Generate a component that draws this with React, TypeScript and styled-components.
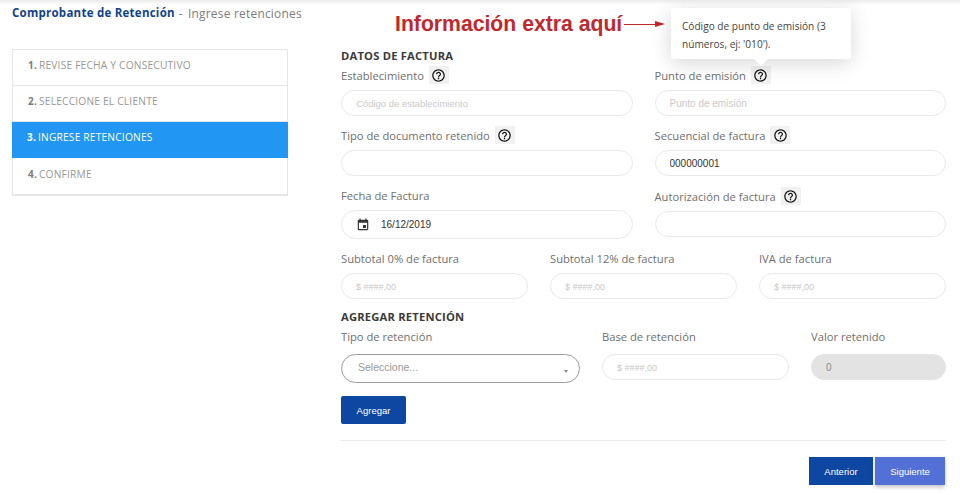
import styled, { createGlobalStyle } from "styled-components";
import { MdHelpOutline, MdEvent } from "react-icons/md";

const steps = [
  { num: "1.", text: "REVISE FECHA Y CONSECUTIVO" },
  { num: "2.", text: "SELECCIONE EL CLIENTE" },
  { num: "3.", text: "INGRESE RETENCIONES", active: true },
  { num: "4.", text: "CONFIRME" },
];

const Help = () => (
  <HelpBox>
    <MdHelpOutline size={15} />
  </HelpBox>
);

const App = () => {
  return (
    <Page>
      <GlobalStyle />
      <TopShade />
      <Annotation>
        <AnnotationText>Información extra aquí</AnnotationText>
        <AnnotationLine />
        <AnnotationHead />
      </Annotation>
      <Tooltip>Código de punto de emisión (3 números, ej: '010').</Tooltip>
      <Layout>
        <Side>
          <Heading>
            <strong>Comprobante de Retención</strong>
            <Dash>-</Dash>
            <span>Ingrese retenciones</span>
          </Heading>
          <Steps>
            {steps.map((s) => (
              <Step key={s.num} $active={s.active}>
                <b>{s.num}</b> {s.text}
              </Step>
            ))}
          </Steps>
        </Side>
        <Main>
          <SectionTitle>DATOS DE FACTURA</SectionTitle>
          <Grid $cols="1fr 1fr">
            <Field>
              <Label>
                Establecimiento <Help />
              </Label>
              <Input $hint={9.5} placeholder="Código de establecimiento" />
            </Field>
            <Field>
              <Label>
                Punto de emisión <Help />
              </Label>
              <Input $hint={10} placeholder="Punto de emisión" />
            </Field>
            <Field>
              <Label>
                Tipo de documento retenido <Help />
              </Label>
              <Input />
            </Field>
            <Field>
              <Label>
                Secuencial de factura <Help />
              </Label>
              <Input defaultValue="000000001" />
            </Field>
            <Field>
              <Label>Fecha de Factura</Label>
              <DateBox>
                <MdEvent size={14} />
                <span>16/12/2019</span>
              </DateBox>
            </Field>
            <Field $nudge>
              <Label>
                Autorización de factura <Help />
              </Label>
              <Input />
            </Field>
          </Grid>
          <Grid $cols="1fr 1fr 1fr">
            <Field>
              <Label>Subtotal 0% de factura</Label>
              <Input placeholder="$ ####,00" />
            </Field>
            <Field>
              <Label>Subtotal 12% de factura</Label>
              <Input placeholder="$ ####,00" />
            </Field>
            <Field>
              <Label>IVA de factura</Label>
              <Input placeholder="$ ####,00" />
            </Field>
          </Grid>
          <SectionTitle $top={10}>AGREGAR RETENCIÓN</SectionTitle>
          <Grid $cols="239px 187px 135px">
            <Field>
              <Label $tall>Tipo de retención</Label>
              <SelectBox>
                <span>Seleccione...</span>
                <Caret />
              </SelectBox>
            </Field>
            <Field>
              <Label $tall>Base de retención</Label>
              <Input placeholder="$ ####,00" />
            </Field>
            <Field>
              <Label $tall>Valor retenido</Label>
              <Input $disabled defaultValue="0" readOnly />
            </Field>
          </Grid>
          <AddButton>Agregar</AddButton>
          <Divider />
          <Footer>
            <NavButton>Anterior</NavButton>
            <NavButton $light>Siguiente</NavButton>
          </Footer>
        </Main>
      </Layout>
    </Page>
  );
};

export default App;

const GlobalStyle = createGlobalStyle`
  html, body {
    margin: 0;
    padding: 0;
    background: #fff;
    overflow: hidden;
  }
  * {
    box-sizing: border-box;
  }
`;

const Page = styled.div`
  position: relative;
  width: 960px;
  height: 495px;
  background: #fff;
  font-family: "Open Sans", "Liberation Sans", sans-serif;
  overflow: hidden;
`;

const TopShade = styled.div`
  height: 5px;
  background: linear-gradient(#ececec, #fff);
`;

const Layout = styled.div`
  display: flex;
  padding: 0 14px 0 12px;
`;

const Side = styled.aside`
  width: 329px;
  flex: none;
`;

const Heading = styled.div`
  display: flex;
  align-items: center;
  height: 15px;
  font-size: 11.9px;
  color: #7d7d7d;
  white-space: nowrap;
  letter-spacing: 0.25px;
  margin-bottom: 29px;
  & > strong {
    color: #123f8f;
    font-weight: 700;
    font-size: 11.5px;
  }
`;

const Dash = styled.span`
  margin: 0 5px 0 4px;
`;

const Steps = styled.div`
  width: 276px;
  border: 1px solid #e6e6e6;
  border-bottom-width: 2px;
`;

const Step = styled.div<{ $active?: boolean }>`
  height: 36px;
  display: flex;
  align-items: center;
  gap: 0;
  padding: 0 0 5px 15px;
  margin: ${(p) => (p.$active ? "0 -1px" : "0")};
  font-size: 10.2px;
  letter-spacing: 0.2px;
  color: ${(p) => (p.$active ? "#fff" : "#979797")};
  background: ${(p) => (p.$active ? "#2196f3" : "#fff")};
  border-bottom: 1px solid ${(p) => (p.$active ? "#2196f3" : "#e6e6e6")};
  &:last-child {
    border-bottom: none;
  }
  & > b {
    font-size: 10px;
    margin-right: 2px;
    color: ${(p) => (p.$active ? "#fff" : "#7c7c7c")};
  }
`;

const Main = styled.main`
  flex: 1;
  padding-top: 43px;
`;

const SectionTitle = styled.h2<{ $top?: number }>`
  margin: ${(p) => p.$top ?? 0}px 0 0;
  height: 15px;
  line-height: 15px;
  font-size: 11.2px;
  font-weight: 700;
  letter-spacing: 0.2px;
  color: #3a3a3a;
`;

const Grid = styled.div<{ $cols: string }>`
  display: grid;
  grid-template-columns: ${(p) => p.$cols};
  column-gap: 22px;
  row-gap: 7px;
  & + & {
    margin-top: 7px;
  }
`;

const Field = styled.div<{ $nudge?: boolean }>`
  display: flex;
  flex-direction: column;
  min-width: 0;
  padding-top: ${(p) => (p.$nudge ? "1px" : "0")};
`;

const Label = styled.label<{ $tall?: boolean }>`
  display: flex;
  align-items: center;
  gap: 5px;
  height: ${(p) => (p.$tall ? "30px" : "27px")};
  padding-bottom: ${(p) => (p.$tall ? "6px" : "3px")};
  font-size: 11.2px;
  color: #6f6f6f;
  white-space: nowrap;
`;

const HelpBox = styled.span`
  display: inline-flex;
  align-items: center;
  justify-content: center;
  width: 20px;
  height: 18px;
  background: #f1f1f1;
  color: #111;
`;

const Input = styled.input<{ $disabled?: boolean; $hint?: number }>`
  width: 100%;
  height: 26px;
  border: 1px solid ${(p) => (p.$disabled ? "#e3e3e3" : "#e9e9e9")};
  border-radius: 13px;
  padding: 0 14px;
  outline: none;
  font-family: "Liberation Sans", Arial, sans-serif;
  font-size: 10px;
  color: ${(p) => (p.$disabled ? "#8a8a8a" : "#333")};
  background: ${(p) => (p.$disabled ? "#e3e3e3" : "#fff")};
  &::placeholder {
    color: #c9c9c9;
    font-size: ${(p) => p.$hint ?? 9}px;
  }
`;

const DateBox = styled.div`
  display: flex;
  align-items: center;
  gap: 11px;
  height: 29px;
  padding-left: 14px;
  border: 1px solid #e9e9e9;
  border-radius: 15px;
  font-family: "Liberation Sans", Arial, sans-serif;
  font-size: 10px;
  color: #333;
`;

const SelectBox = styled.div`
  position: relative;
  display: flex;
  align-items: center;
  height: 29px;
  padding: 0 16px 3px;
  border: 1.5px solid #9c9c9c;
  border-radius: 15px;
  font-family: "Liberation Sans", Arial, sans-serif;
  font-size: 10.5px;
  color: #999;
`;

const Caret = styled.i`
  position: absolute;
  right: 11px;
  top: 15px;
  border-left: 2.5px solid transparent;
  border-right: 2.5px solid transparent;
  border-top: 3px solid #888;
`;

const AddButton = styled.button`
  display: block;
  width: 65px;
  height: 28px;
  margin-top: 13px;
  border: none;
  border-radius: 2px;
  background: #0d47a1;
  color: #fff;
  font-family: "Liberation Sans", Arial, sans-serif;
  font-size: 9.5px;
`;

const Divider = styled.hr`
  margin: 16px 0;
  border: none;
  border-top: 1px solid #eaeaea;
`;

const Footer = styled.div`
  display: flex;
  justify-content: flex-end;
  gap: 2px;
  padding-right: 1px;
`;

const NavButton = styled.button<{ $light?: boolean }>`
  width: ${(p) => (p.$light ? "70px" : "64px")};
  height: 28px;
  border: none;
  background: ${(p) => (p.$light ? "#5270d6" : "#0d47a1")};
  color: #fff;
  font-family: "Liberation Sans", Arial, sans-serif;
  font-size: 9.5px;
  box-shadow: ${(p) => (p.$light ? "0 2px 4px rgba(0,0,0,.25)" : "none")};
`;

const Annotation = styled.div`
  position: absolute;
  left: 395px;
  top: 11px;
  display: flex;
  align-items: center;
`;

const AnnotationText = styled.span`
  font-family: "Liberation Sans", Arial, sans-serif;
  font-weight: 700;
  font-size: 21.2px;
  line-height: 26px;
  color: #c1272d;
  white-space: nowrap;
`;

const AnnotationLine = styled.i`
  width: 31px;
  height: 1px;
  margin-left: 2px;
  background: #c1272d;
`;

const AnnotationHead = styled.i`
  border-left: 10px solid #c1272d;
  border-top: 3.5px solid transparent;
  border-bottom: 3.5px solid transparent;
`;

const Tooltip = styled.div`
  position: absolute;
  left: 671px;
  top: 8px;
  width: 180px;
  height: 51px;
  padding: 9px 11px;
  background: #fff;
  border-radius: 3px;
  box-shadow: 0 4px 20px rgba(0, 0, 0, 0.16);
  font-size: 10.1px;
  line-height: 18px;
  color: #444;
  z-index: 2;
  &::after {
    content: "";
    position: absolute;
    left: 83px;
    bottom: -7px;
    border-left: 7px solid transparent;
    border-right: 7px solid transparent;
    border-top: 7px solid #fff;
  }
`;
